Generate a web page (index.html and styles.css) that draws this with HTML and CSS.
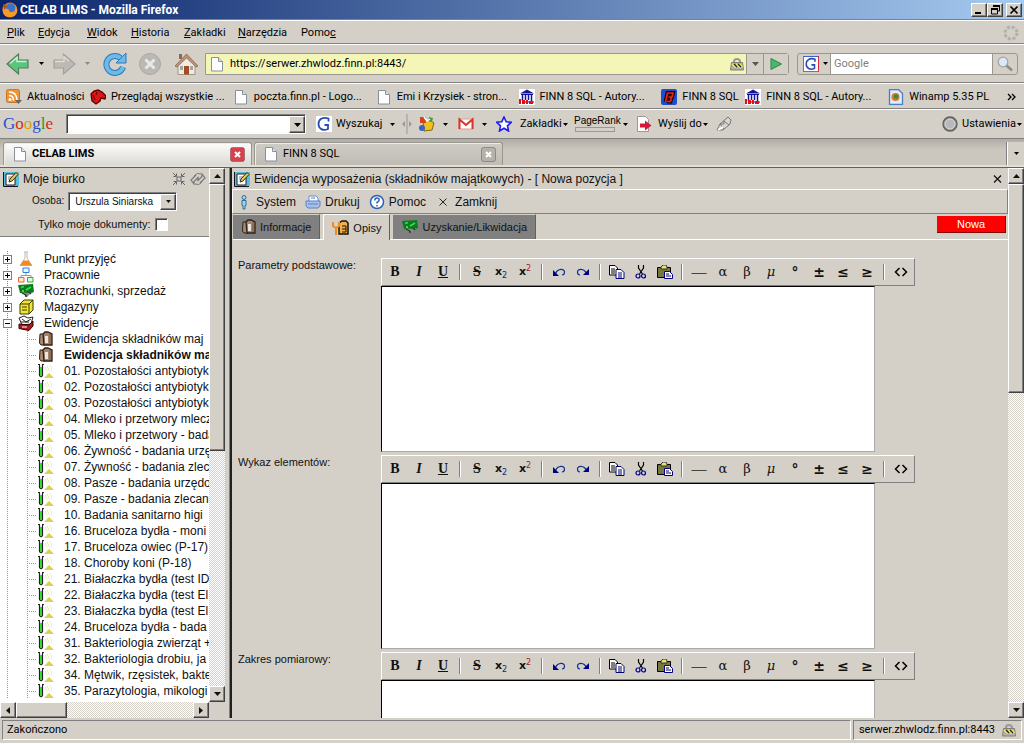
FILE: index.html
```html
<!DOCTYPE html>
<html lang="pl">
<head>
<meta charset="utf-8">
<title>CELAB LIMS</title>
<link rel="stylesheet" href="styles.css">
</head>
<body>
<svg class="defs" aria-hidden="true">
  <symbol id="page" viewBox="0 0 16 16"><path d="M2.5 1.5h7l4 4v9.500h-11z" fill="#fdfdff" stroke="#8a8f98"/><path d="M9.500 1.500v4h4" fill="#dde3ec" stroke="#8a8f98"/></symbol>
  <symbol id="down" viewBox="0 0 7 4"><path d="M0 0h7L3.500 4z" fill="currentColor"/></symbol>
  <symbol id="up" viewBox="0 0 7 4"><path d="M0 4h7L3.500 0z" fill="currentColor"/></symbol>
  <symbol id="left" viewBox="0 0 4 7"><path d="M4 0v7L0 3.500z" fill="currentColor"/></symbol>
  <symbol id="right" viewBox="0 0 4 7"><path d="M0 0v7L4 3.500z" fill="currentColor"/></symbol>
  <symbol id="cross" viewBox="0 0 9 8"><path d="M1 .5l7 7M8 .5l-7 7" stroke="currentColor" stroke-width="1.200" fill="none"/></symbol>
  <symbol id="arrow-l" viewBox="0 0 24 24"><path d="M1 12L12.500 2v6H22v8h-9.500v6z" fill="#58c77c" stroke="#5b7a63" stroke-width="1.200"/><path d="M4 11.500L11 5.500V9.500h9.500" stroke="#fff" stroke-opacity=".7" fill="none" stroke-width="1.500"/></symbol>
  <symbol id="arrow-r" viewBox="0 0 24 24"><path d="M23 12L11.500 2v6H2v8h9.500v6z" fill="#bcbab5" stroke="#a3a19c" stroke-width="1.200"/><path d="M3 9.500h9V5l5 4" stroke="#dedcd8" fill="none" stroke-width="1.500"/></symbol>
  <symbol id="lock" viewBox="0 0 14 14"><path d="M4 6V4.500C4 1 10 1 10 4.500V6" fill="none" stroke="#999" stroke-width="2"/><path d="M1.500 5.500h11l1 7.500H.5z" fill="#b4b2a8" stroke="#808078"/><path d="M2 7l4 3.500M6 7l4 3.500M9.500 7l3 3" stroke="#f4ee70" stroke-width="1.500"/><path d="M4 7l3 3M8 7l3 3" stroke="#222" stroke-width="1.300"/></symbol>
  <symbol id="gletter" viewBox="0 0 16 16"><path fill="#fff" d="M0 0h16v16H0z"/><path d="M12.500 5.500V2.500C6.500.5 2.500 3.500 2.500 8s4.500 7.500 9.500 5V9H8.500" fill="none" stroke="#2a4db5" stroke-width="1.800"/></symbol>
  <symbol id="museum" viewBox="0 0 16 16"><path fill="#fff" d="M0 0h16v16H0z"/><path d="M1 4.500L8 .5l7 4zM2 5h12v1H2z" fill="#14149a"/><path d="M3.500 6v6M6.500 6v5M9.500 6v5M12.500 6v6" stroke="#14149a" stroke-width="1.500"/><path d="M6 12.500h9v1H6z" fill="#14149a"/><path d="M0 10h2v5H0zM3 11h3v4H3zM7 11h2v4H7zM10 12h4v3h-4z" fill="#e01018"/></symbol>
  <symbol id="note" viewBox="0 0 16 16"><path d="M0 1h16v14H0z" fill="#55c0dc"/><path d="M.5 1v14.500H15" fill="none" stroke="#112" stroke-width="1"/><path d="M3 3h9v11H3z" fill="#fff" stroke="#222"/><path d="M5 6h4M5 8h3" stroke="#888"/><path d="M6 11l1-3L13 1.500l2 2-6 6.500z" fill="#e6c95c" stroke="#3a2a10"/></symbol>
  <symbol id="flask" viewBox="0 0 16 16"><path d="M6 1h4M7 1v6L2 14.500h12L9 7V1" fill="#fdfdff" stroke="#c9b9a9"/><path d="M5.500 9.500h5l3.500 5H2z" fill="#f08a24"/></symbol>
  <symbol id="org" viewBox="0 0 16 16"><path d="M8 5v4M3 11V8.500h10V11" fill="none" stroke="#999"/><path d="M5 1h6v4.500H5z" fill="#dff" stroke="#3678dc"/><path d="M.5 10.500h5.500V15H.5z" fill="#ffe8d0" stroke="#e06a30"/><path d="M9.500 10.500H15V15H9.500z" fill="#dfd" stroke="#3aa33a"/></symbol>
  <symbol id="money" viewBox="0 0 16 16"><path d="M0 2l15-1 1 8-5 2-9-1z" fill="#0c7a1e"/><path d="M3 4.500l3-1M8 7l5-3M4 8h2" stroke="#2fe347" stroke-width="1.800"/><path d="M4 9l4 5h1l5-5-5 1z" fill="#868d86"/><path d="M4 10l4 2M11 9l2 2M7 13h2" stroke="#333" stroke-width="1.300"/></symbol>
  <symbol id="box" viewBox="0 0 16 16"><path d="M2 5l4-4h9v10l-4 4H2z" fill="#eee53a" stroke="#3a3800"/><path d="M2 5h9v10M11 5l4-4" fill="none" stroke="#3a3800"/><path d="M4 8h5M4 11h5" stroke="#7a7400" stroke-width="1.500"/></symbol>
  <symbol id="drawer" viewBox="0 0 16 16"><path d="M1 3l5-2 4 2 5-1-2 7-9 1z" fill="#fff" stroke="#222"/><path d="M4 4l4 3 5-3M3 7h8" stroke="#222" fill="none"/><path d="M1 9l10 1 4-4v5l-4 4.500-10-2z" fill="#b01820" stroke="#300"/><path d="M4 12h5" stroke="#fff"/></symbol>
  <symbol id="clip" viewBox="0 0 16 16"><path d="M2 3h5v11H3L1.500 12z" fill="#a88a70" stroke="#2c2019"/><path d="M5 3l2-2h3l4 2v11H6z" fill="#a5866c" stroke="#2c2019" stroke-width="1.300"/><path d="M8.500 5v7" stroke="#e9e6e2" stroke-width="3"/><path d="M12 3v10" stroke="#75563d"/></symbol>
  <symbol id="tube" viewBox="0 0 18 16"><path d="M1 1.500h2M5 1.500h2" stroke="#222"/><path d="M2.500 2v10.500q1.500 2.500 3 0V2" fill="#fff" stroke="#222" stroke-width="1.200"/><path d="M3 4h2v9H3z" fill="#38d438"/><path d="M7 15l5-5 5 5z" fill="#d8d24c"/><path d="M9 7h1M12 8h1M14 7h1M10 4h1M13 3h1M11 6h1M14 5h1M8 5h1" stroke="#e0da70"/></symbol>
  <symbol id="expand" viewBox="0 0 14 14"><path d="M5 5h4v4H5z" fill="none" stroke="#666"/><path d="M1 1l3 3M13 1l-3 3M1 13l3-3M13 13l-3-3M4.500 1.500v3h-3M9.500 1.500v3h3M1.500 9.500h3v3M12.500 9.500h-3v3" fill="none" stroke="#666"/></symbol>
  <symbol id="sync" viewBox="0 0 16 14"><path d="M6 3L1 8l3 4V9.500l4-4V9M10 11l5-5-3-4v2.500l-4 4V5" fill="none" stroke="#777" stroke-width="1.200"/><path d="M4 4q3-4 7-2M5 12q4 2 7-2" fill="none" stroke="#777"/></symbol>
  <symbol id="undo" viewBox="0 0 14 14"><path d="M3.500 8.500C6 3 12.500 3.500 12.500 7c0 1.500-1 3-2.500 3" fill="none" stroke="#113390" stroke-width="1.200"/><path d="M1 5v6h6z" fill="#000080"/></symbol>
  <symbol id="redo" viewBox="0 0 14 14"><path d="M10.500 8.500C8 3 1.500 3.500 1.500 7c0 1.500 1 3 2.500 3" fill="none" stroke="#113390" stroke-width="1.200"/><path d="M13 4v6H7z" fill="#000080"/></symbol>
  <symbol id="copy" viewBox="0 0 16 14"><path d="M.5.5H6l2.500 2.500v7h-8z" fill="#fff" stroke="#000"/><path d="M2 4h4M2 6h4M2 8h4" stroke="#000"/><path d="M7 4.500h5l3 3v6H7z" fill="#fff" stroke="#000070"/><path d="M9 8h4M9 10h4M9 12h4" stroke="#000070"/></symbol>
  <symbol id="cut" viewBox="0 0 12 14"><path d="M3.500 0v3l4 6M8.500 0v3l-4 6" fill="none" stroke="#000" stroke-width="1.200"/><circle cx="3" cy="11" r="2" fill="none" stroke="#000090" stroke-width="1.200"/><circle cx="8.500" cy="11" r="2" fill="none" stroke="#000090" stroke-width="1.200"/></symbol>
  <symbol id="paste" viewBox="0 0 16 14"><path d="M.5 2.500h13v10H.5z" fill="#74783c" stroke="#000"/><path d="M4 4V2l2-2h3l1 2v2z" fill="#e9e36c" stroke="#333"/><path d="M7.500 6.500h5l3 3v4h-8z" fill="#fff" stroke="#000080"/><path d="M9 9h3M9 11h5" stroke="#000080"/></symbol>
  <symbol id="code" viewBox="0 0 14 10"><path d="M5.500 1L1.500 5l4 4M8.500 1l4 4-4 4" fill="none" stroke="#000" stroke-width="1.500"/></symbol>
  <symbol id="close" viewBox="0 0 15 15"><rect x=".5" y=".5" width="14" height="14" rx="2" fill="currentColor" stroke="#000" stroke-opacity=".25"/><path d="M5 5l5 5M10 5l-5 5" stroke="#fff" stroke-width="2"/></symbol>
</svg>

<header class="titlebar">
  <svg class="i16" viewBox="0 0 16 16"><circle cx="8" cy="8" r="7.500" fill="#e8741c"/><circle cx="8.500" cy="6.500" r="5" fill="#3b73c8"/><path d="M1 4c1 4 2 2 5 3 2 1 0 3 4 3 3 0 4-3 3-7 4 5 2 12-5 12S0 9 1 4z" fill="#f49a28"/><path d="M1 2l4 2-3 4z" fill="#c9480e"/></svg>
  <h1 class="titlebar-text">CELAB LIMS - Mozilla Firefox</h1>
  <button class="win-btn" aria-label="Minimalizuj"><svg class="i12" viewBox="0 0 12 10"><path d="M2 7h6v2H2z"/></svg></button>
  <button class="win-btn" aria-label="Przywróć"><svg class="i12" viewBox="0 0 12 10"><path d="M4.500 2v-1h6v5H8M2.500 4h6v5h-6z" fill="none" stroke="#000"/><path d="M4 1h7M2 4h7" stroke="#000" stroke-width="2"/></svg></button>
  <button class="win-btn win-close" aria-label="Zamknij okno"><svg class="i12" viewBox="0 0 12 10"><path d="M2.500 1.500l7 7M9.500 1.500l-7 7" stroke="#000" stroke-width="1.700"/></svg></button>
</header>

<nav class="menubar">
  <a href="#"><u>P</u>lik</a><a href="#"><u>E</u>dycja</a><a href="#"><u>W</u>idok</a><a href="#"><u>H</u>istoria</a><a href="#"><u>Z</u>akładki</a><a href="#"><u>N</u>arzędzia</a><a href="#">Pomo<u>c</u></a>
  <svg class="i16" viewBox="0 0 16 16"><circle cx="8" cy="8" r="6" fill="none" stroke="#b3b0a9" stroke-width="3" stroke-dasharray="3 1.700"/></svg>
</nav>

<div class="navbar">
  <button aria-label="Wstecz"><svg class="i24"><use href="#arrow-l"/></svg></button>
  <button aria-label="Historia wstecz"><svg class="tri-s"><use href="#down"/></svg></button>
  <button aria-label="Dalej"><svg class="i24"><use href="#arrow-r"/></svg></button>
  <button class="dim" aria-label="Historia dalej"><svg class="tri-s"><use href="#down"/></svg></button>
  <button aria-label="Odśwież"><svg class="i24" viewBox="0 0 24 24"><path d="M18 6.500A8.500 8.500 0 1 0 20 15" fill="none" stroke="#2d79b8" stroke-width="6"/><path d="M18 6.500A8.500 8.500 0 1 0 20 15" fill="none" stroke="#6cb9ea" stroke-width="4"/><path d="M23 1v10H13z" fill="#6cb9ea" stroke="#2d79b8"/></svg></button>
  <button aria-label="Zatrzymaj"><svg class="i24" viewBox="0 0 24 24"><circle cx="12" cy="12" r="10.500" fill="#bab8b4" stroke="#aaa8a3"/><path d="M7.500 7.500l9 9M16.500 7.500l-9 9" stroke="#e9e8e5" stroke-width="3"/></svg></button>
  <button aria-label="Strona startowa"><svg class="i24" viewBox="0 0 24 24"><path d="M4 12v10.500h17V12l-8.500-9z" fill="#eeeae4" stroke="#a39585"/><path d="M5 2h3v5H5z" fill="#8b6c52"/><path d="M1 14L12.500 2 24 14l-2 1-9.500-9L3 15z" fill="#bd9475" stroke="#7e5e48" stroke-width=".7"/><path d="M10 14h5v8.500h-5z" fill="#a14c28"/><path d="M6 14h3v4H6zM16 14h3v4h-3z" fill="#a9a49c"/></svg></button>
  <div class="urlbar">
    <svg class="i16"><use href="#page"/></svg>
    <input aria-label="Adres" value="https://serwer.zhwlodz.finn.pl:8443/">
    <svg class="i14"><use href="#lock"/></svg>
    <button class="url-drop" aria-label="Lista adresów"><svg class="tri"><use href="#down"/></svg></button>
    <button class="url-go" aria-label="Przejdź"><svg class="i12" viewBox="0 0 12 12"><path d="M1 .5L11.500 6 1 11.500z" fill="#46b866" stroke="#28854a"/></svg></button>
  </div>
  <div class="searchbar">
    <button class="search-engine" aria-label="Wyszukiwarka"><svg class="i16 g-frame"><use href="#gletter"/></svg><svg class="tri-s"><use href="#down"/></svg></button>
    <input aria-label="Szukaj" placeholder="Google">
    <button class="search-go" aria-label="Szukaj"><svg class="i16" viewBox="0 0 16 16"><path d="M9 9l6 5.500" stroke="#8b8b88" stroke-width="2.500"/><circle cx="6" cy="6" r="4.800" fill="#dbe9f4" stroke="#a0a6ab" stroke-width="1.300"/></svg></button>
  </div>
</div>

<nav class="bookmarks">
  <a class="bm bm-short" href="#"><svg class="i16" viewBox="0 0 16 16"><rect x=".5" y=".5" width="13" height="13" rx="2" fill="#f0943a" stroke="#c8752a"/><circle cx="4" cy="10.500" r="1.500" fill="#fff"/><path d="M3 6.500q4.500 0 4.500 5M3 3q8 0 8 8.500" fill="none" stroke="#fff" stroke-width="1.500"/><path d="M9 11h7l-3.500 4z" fill="#666"/></svg>Aktualności</a>
  <a class="bm" href="#"><svg class="i16" viewBox="0 0 16 16"><path d="M1 5l3-3 4-1 4 2 4 4-1 3-4-1-1 3-4 3-4-3z" fill="#e01414" stroke="#500" stroke-width="1.300"/><path d="M3 6l2 5M7 3L6 6" stroke="#500"/></svg>Przeglądaj wszystkie ...</a>
  <a class="bm" href="#"><svg class="i16"><use href="#page"/></svg>poczta.finn.pl - Logo...</a>
  <a class="bm" href="#"><svg class="i16"><use href="#page"/></svg>Emi i Krzysiek - stron...</a>
  <a class="bm" href="#"><svg class="i16"><use href="#museum"/></svg>FINN 8 SQL - Autory...</a>
  <a class="bm bm-short" href="#"><svg class="i16" viewBox="0 0 16 16"><rect width="16" height="16" rx="2" fill="#1c4fd0"/><path d="M4.500 13L6.500 4h5.500l-1 4H7.500h3l-1 4.500H6" fill="none" stroke="#200" stroke-width="4"/><path d="M4.500 13L6.500 4h5.500l-1 4H7.500h3l-1 4.500H6" fill="none" stroke="#e82418" stroke-width="1.700"/></svg>FINN 8 SQL</a>
  <a class="bm" href="#"><svg class="i16"><use href="#museum"/></svg>FINN 8 SQL - Autory...</a>
  <a class="bm bm-last" href="#"><svg class="i16" viewBox="0 0 16 16"><path d="M1.500.5h9l4 4v11h-13z" fill="#dcecfb" stroke="#4a7ec0" stroke-width="1.300"/><circle cx="7.500" cy="8" r="4" fill="#dd7a24"/><circle cx="8" cy="7.500" r="2.200" fill="#2e8a5a"/></svg>Winamp 5.35 PL</a>
  <button class="bm-more" aria-label="Więcej zakładek"><svg class="i9" viewBox="0 0 9 8"><path d="M1 1l3 3-3 3M5 1l3 3-3 3" fill="none" stroke="#000" stroke-width="1.300"/></svg></button>
</nav>

<div class="gbar">
  <span class="glogo"><span class="g-b">G</span><span class="g-r">o</span><span class="g-y">o</span><span class="g-b">g</span><span class="g-g">l</span><span class="g-r">e</span></span>
  <div class="gselect sunken"><input aria-label="Szukaj w Google"><button class="drop" aria-label="Rozwiń"><svg class="tri"><use href="#down"/></svg></button></div>
  <svg class="i16"><use href="#gletter"/></svg>
  <button>Wyszukaj</button>
  <svg class="tri-s"><use href="#down"/></svg>
  <svg class="split" viewBox="0 0 10 20"><path d="M5 0v20" stroke="#999"/><path d="M3 7v6L0 10zM7 7v6l3-3z" fill="#999"/></svg>
  <svg class="i16" viewBox="0 0 16 16"><path d="M4 6l6-2 5 3-2 7-8 1z" fill="#f0c020" stroke="#8a6500"/><path d="M1 1h6v6H1z" fill="#d8411c"/><circle cx="3" cy="12" r="3" fill="#3b66c8"/><path d="M10 1l4 1-1 4-4-1z" fill="#4a9a44"/><path d="M5 1l3 4 3-2" stroke="#fff" stroke-width="1.500" fill="none"/></svg>
  <svg class="tri-s"><use href="#down"/></svg>
  <svg class="i16" viewBox="0 0 16 16"><path d="M1 3h14v10H1z" fill="#fff" stroke="#e29a92"/><path d="M1.500 13V3.500L8 9l6.500-5.500V13" fill="none" stroke="#d8352a" stroke-width="2"/></svg>
  <svg class="tri-s"><use href="#down"/></svg>
  <svg class="i16" viewBox="0 0 16 16"><path d="M8 1l2.200 4.800 5 .5-3.700 3.500 1 5.200L8 12.300 3.500 15l1-5.200L.8 6.300l5-.5z" fill="#fff" stroke="#1c1cf0" stroke-width="1.600"/></svg>
  <button>Zakładki<svg class="tri-s"><use href="#down"/></svg></button>
  <span class="pagerank"><span>PageRank</span><span class="pr-meter"></span></span>
  <svg class="tri-s"><use href="#down"/></svg>
  <svg class="i16" viewBox="0 0 16 16"><path d="M1.500.5h8l3 3v12h-11z" fill="#fff" stroke="#999"/><path d="M4 7.500h5v-3l6.500 5-6.500 5v-3H4z" fill="#d81838"/></svg>
  <button>Wyślij do<svg class="tri-s"><use href="#down"/></svg></button>
  <svg class="i16" viewBox="0 0 16 16"><path d="M1 14l3-6 8-7 3 3-1 4-7 6z" fill="#d8d6d1" stroke="#777"/><path d="M4 8l4 5M8 5l5 4M4 8h4V5" stroke="#777" fill="none"/><path d="M2 14l5-3" stroke="#fff" stroke-width="1.500"/></svg>
  <svg class="i16 g-end" viewBox="0 0 16 16"><circle cx="8" cy="8" r="7" fill="#8e8e8e" stroke="#5f5f5f" stroke-width="1.300"/><circle cx="8" cy="8" r="5" fill="#b8b8b8" stroke="#ddd"/></svg>
  <button>Ustawienia<svg class="tri-s"><use href="#down"/></svg></button>
</div>

<div class="tabs">
  <div class="tab tab-on"><svg class="i16"><use href="#page"/></svg><a href="#">CELAB LIMS</a><button aria-label="Zamknij kartę"><svg class="i15 red"><use href="#close"/></svg></button></div>
  <div class="tab"><svg class="i16"><use href="#page"/></svg><a href="#">FINN 8 SQL</a><button aria-label="Zamknij kartę"><svg class="i15 grey"><use href="#close"/></svg></button></div>
  <button class="tabs-all" aria-label="Lista kart"><svg class="tri-s"><use href="#down"/></svg></button>
</div>

<div class="frames">
  <aside class="side">
    <div class="side-view">
      <form class="desk">
        <div class="desk-head"><svg class="i16"><use href="#note"/></svg><h2>Moje biurko</h2><svg class="i14"><use href="#expand"/></svg><svg class="sync"><use href="#sync"/></svg></div>
        <div class="desk-person"><label for="person">Osoba:</label><span class="pick sunken"><select id="person"><option>Urszula Siniarska</option></select><span class="drop"><svg class="tri-s"><use href="#down"/></svg></span></span></div>
        <div class="desk-only"><label for="only">Tylko moje dokumenty:</label><input type="checkbox" id="only" class="sunken"></div>
      </form>
      <ul class="tree">
        <li class="root"><button class="box plus" aria-label="Rozwiń"></button><svg class="i16"><use href="#flask"/></svg><a href="#">Punkt przyjęć</a></li>
        <li class="root"><button class="box plus" aria-label="Rozwiń"></button><svg class="i16"><use href="#org"/></svg><a href="#">Pracownie</a></li>
        <li class="root"><button class="box plus" aria-label="Rozwiń"></button><svg class="i16"><use href="#money"/></svg><a href="#">Rozrachunki, sprzedaż</a></li>
        <li class="root"><button class="box plus" aria-label="Rozwiń"></button><svg class="i16"><use href="#box"/></svg><a href="#">Magazyny</a></li>
        <li class="root"><button class="box" aria-label="Zwiń"></button><svg class="i16"><use href="#drawer"/></svg><a href="#">Ewidencje</a></li>
        <li class="leaf"><svg class="i18"><use href="#clip"/></svg><a href="#">Ewidencja składników maj</a></li>
        <li class="leaf on"><svg class="i18"><use href="#clip"/></svg><a href="#">Ewidencja składników ma</a></li>
        <li class="leaf"><svg class="i18"><use href="#tube"/></svg><a href="#">01. Pozostałości antybiotyk</a></li>
        <li class="leaf"><svg class="i18"><use href="#tube"/></svg><a href="#">02. Pozostałości antybiotyk</a></li>
        <li class="leaf"><svg class="i18"><use href="#tube"/></svg><a href="#">03. Pozostałości antybiotyk</a></li>
        <li class="leaf"><svg class="i18"><use href="#tube"/></svg><a href="#">04. Mleko i przetwory mlecz</a></li>
        <li class="leaf"><svg class="i18"><use href="#tube"/></svg><a href="#">05. Mleko i przetwory - bada</a></li>
        <li class="leaf"><svg class="i18"><use href="#tube"/></svg><a href="#">06. Żywność - badania urzę</a></li>
        <li class="leaf"><svg class="i18"><use href="#tube"/></svg><a href="#">07. Żywność - badania zlec</a></li>
        <li class="leaf"><svg class="i18"><use href="#tube"/></svg><a href="#">08. Pasze - badania urzędo</a></li>
        <li class="leaf"><svg class="i18"><use href="#tube"/></svg><a href="#">09. Pasze - badania zlecan</a></li>
        <li class="leaf"><svg class="i18"><use href="#tube"/></svg><a href="#">10. Badania sanitarno higi</a></li>
        <li class="leaf"><svg class="i18"><use href="#tube"/></svg><a href="#">16. Bruceloza bydła - moni</a></li>
        <li class="leaf"><svg class="i18"><use href="#tube"/></svg><a href="#">17. Bruceloza owiec (P-17)</a></li>
        <li class="leaf"><svg class="i18"><use href="#tube"/></svg><a href="#">18. Choroby koni (P-18)</a></li>
        <li class="leaf"><svg class="i18"><use href="#tube"/></svg><a href="#">21. Białaczka bydła (test ID</a></li>
        <li class="leaf"><svg class="i18"><use href="#tube"/></svg><a href="#">22. Białaczka bydła (test El</a></li>
        <li class="leaf"><svg class="i18"><use href="#tube"/></svg><a href="#">23. Białaczka bydła (test El</a></li>
        <li class="leaf"><svg class="i18"><use href="#tube"/></svg><a href="#">24. Bruceloza bydła - bada</a></li>
        <li class="leaf"><svg class="i18"><use href="#tube"/></svg><a href="#">31. Bakteriologia zwierząt +</a></li>
        <li class="leaf"><svg class="i18"><use href="#tube"/></svg><a href="#">32. Bakteriologia drobiu, ja</a></li>
        <li class="leaf"><svg class="i18"><use href="#tube"/></svg><a href="#">34. Mętwik, rzęsistek, bakte</a></li>
        <li class="leaf"><svg class="i18"><use href="#tube"/></svg><a href="#">35. Parazytologia, mikologi</a></li>
      </ul>
    </div>
    <div class="vscroll side-v"><button class="sb" aria-label="W górę"><svg class="tri"><use href="#up"/></svg></button><span class="thumb"></span><button class="sb end" aria-label="W dół"><svg class="tri"><use href="#down"/></svg></button></div>
    <div class="hscroll"><button class="sb" aria-label="W lewo"><svg class="tri-h"><use href="#left"/></svg></button><span class="thumb"></span><button class="sb end" aria-label="W prawo"><svg class="tri-h"><use href="#right"/></svg></button></div>
  </aside>

  <main class="main">
    <div class="main-view">
      <div class="doc-head"><svg class="i16"><use href="#note"/></svg><h2>Ewidencja wyposażenia (składników majątkowych) - [ Nowa pozycja ]</h2><button aria-label="Zamknij"><svg class="i9"><use href="#cross"/></svg></button></div>
      <div class="doc-tools">
        <button><svg class="i16" viewBox="0 0 16 16"><circle cx="8" cy="3.500" r="2" fill="#9fd4ee" stroke="#2d6f96"/><path d="M6 6.500h4v5H9v3.500H7v-3.500H6z" fill="#9fd4ee" stroke="#2d6f96"/></svg>System</button>
        <button><svg class="i16" viewBox="0 0 16 16"><path d="M4 7V2h7l2 2v3" fill="#fff" stroke="#6a8ed0"/><path d="M1 7h14v5l-2 2H3l-2-2z" fill="#a9c0ea" stroke="#5a7fc6"/><path d="M3 10h10M6 4h4" stroke="#5a7fc6"/></svg>Drukuj</button>
        <button><svg class="i16" viewBox="0 0 16 16"><circle cx="8" cy="8" r="6.500" fill="#fff" stroke="#2e62b4" stroke-width="1.500"/><path d="M5.800 6.500q0-2.500 2.200-2.500t2.200 2q0 1.200-2.200 2.500v1M8 11v1.500" fill="none" stroke="#2e62b4" stroke-width="1.500"/></svg>Pomoc</button>
        <button><svg class="i16" viewBox="0 0 16 16"><path d="M4.500 4.500l7 7M11.500 4.500l-7 7" stroke="#222"/></svg>Zamknij</button>
      </div>
      <div class="doc-tabs">
        <button class="dtab"><svg class="i16"><use href="#clip"/></svg>Informacje</button>
        <button class="dtab dtab-on"><svg class="i18" viewBox="0 0 18 16"><path d="M7 3l3-2h4l2 2v11H7z" fill="#f2b04a" stroke="#1c1208" stroke-width="1.500"/><path d="M10 6h4v6h-4M10 9h4" fill="none" stroke="#1c1208"/><path d="M1 2v4l3 2 3-2V2M4 7v8" fill="none" stroke="#ee8c22" stroke-width="2"/></svg>Opisy</button>
        <button class="dtab"><svg class="i18" viewBox="0 0 16 16"><use href="#money"/></svg>Uzyskanie/Likwidacja</button>
        <span class="badge">Nowa</span>
      </div>
      <div class="fields">
        <div class="field"><label for="f1">Parametry podstawowe:</label>
          <div class="editor"><div class="ebar"><button class="s"><b>B</b></button><button class="s"><b><i>I</i></b></button><button class="s"><b><u>U</u></b></button><span class="sep"></span><button class="s"><b><s>S</s></b></button><button class="x">x<sub>2</sub></button><button class="x">x<sup>2</sup></button><span class="sep"></span><button aria-label="Cofnij"><svg class="i14"><use href="#undo"/></svg></button><button aria-label="Ponów"><svg class="i14"><use href="#redo"/></svg></button><span class="sep"></span><button aria-label="Kopiuj"><svg class="ico"><use href="#copy"/></svg></button><button aria-label="Wytnij"><svg class="ico"><use href="#cut"/></svg></button><button aria-label="Wklej"><svg class="ico"><use href="#paste"/></svg></button><span class="sep"></span><button class="dash">—</button><button class="g">α</button><button class="g">β</button><button class="g"><i>μ</i></button><button class="m">°</button><button class="m">±</button><button class="m">≤</button><button class="m">≥</button><span class="sep"></span><button aria-label="Kod"><svg class="code"><use href="#code"/></svg></button></div><textarea id="f1"></textarea></div></div>
        <div class="field"><label for="f2">Wykaz elementów:</label>
          <div class="editor"><div class="ebar"><button class="s"><b>B</b></button><button class="s"><b><i>I</i></b></button><button class="s"><b><u>U</u></b></button><span class="sep"></span><button class="s"><b><s>S</s></b></button><button class="x">x<sub>2</sub></button><button class="x">x<sup>2</sup></button><span class="sep"></span><button aria-label="Cofnij"><svg class="i14"><use href="#undo"/></svg></button><button aria-label="Ponów"><svg class="i14"><use href="#redo"/></svg></button><span class="sep"></span><button aria-label="Kopiuj"><svg class="ico"><use href="#copy"/></svg></button><button aria-label="Wytnij"><svg class="ico"><use href="#cut"/></svg></button><button aria-label="Wklej"><svg class="ico"><use href="#paste"/></svg></button><span class="sep"></span><button class="dash">—</button><button class="g">α</button><button class="g">β</button><button class="g"><i>μ</i></button><button class="m">°</button><button class="m">±</button><button class="m">≤</button><button class="m">≥</button><span class="sep"></span><button aria-label="Kod"><svg class="code"><use href="#code"/></svg></button></div><textarea id="f2"></textarea></div></div>
        <div class="field"><label for="f3">Zakres pomiarowy:</label>
          <div class="editor"><div class="ebar"><button class="s"><b>B</b></button><button class="s"><b><i>I</i></b></button><button class="s"><b><u>U</u></b></button><span class="sep"></span><button class="s"><b><s>S</s></b></button><button class="x">x<sub>2</sub></button><button class="x">x<sup>2</sup></button><span class="sep"></span><button aria-label="Cofnij"><svg class="i14"><use href="#undo"/></svg></button><button aria-label="Ponów"><svg class="i14"><use href="#redo"/></svg></button><span class="sep"></span><button aria-label="Kopiuj"><svg class="ico"><use href="#copy"/></svg></button><button aria-label="Wytnij"><svg class="ico"><use href="#cut"/></svg></button><button aria-label="Wklej"><svg class="ico"><use href="#paste"/></svg></button><span class="sep"></span><button class="dash">—</button><button class="g">α</button><button class="g">β</button><button class="g"><i>μ</i></button><button class="m">°</button><button class="m">±</button><button class="m">≤</button><button class="m">≥</button><span class="sep"></span><button aria-label="Kod"><svg class="code"><use href="#code"/></svg></button></div><textarea id="f3"></textarea></div></div>
      </div>
    </div>
    <div class="vscroll main-v"><button class="sb" aria-label="W górę"><svg class="tri"><use href="#up"/></svg></button><span class="thumb"></span><button class="sb end" aria-label="W dół"><svg class="tri"><use href="#down"/></svg></button></div>
  </main>
</div>

<footer class="status"><span class="st-text">Zakończono</span><span class="st-host">serwer.zhwlodz.finn.pl:8443<svg class="i14"><use href="#lock"/></svg></span></footer>
</body>
</html>
```
FILE: styles.css
```css
:root {
  --face: #d4d0c8;
  --shade: #808080;
  --ui: Roboto, "Liberation Sans", sans-serif;
  --doc: "Liberation Sans", Arial, sans-serif;
}
* { box-sizing: border-box; }
body {
  margin: 0;
  height: 100vh;
  display: flex;
  flex-direction: column;
  overflow: hidden;
  background: var(--face);
  font: 11px/16px var(--ui);
  color: #000;
}
a { color: inherit; text-decoration: none; white-space: nowrap; }
h1, h2 { margin: 0; font-size: inherit; font-weight: normal; white-space: nowrap; }
button {
  border: 0;
  padding: 0;
  margin: 0;
  background: none;
  font: inherit;
  color: inherit;
  white-space: nowrap;
  display: flex;
  align-items: center;
  justify-content: center;
}
input, textarea, select { border: 0; padding: 0; margin: 0; font: inherit; color: inherit; background: #fff; outline: 0; border-radius: 0; }
svg { flex: none; display: block; }
.defs { width: 0; height: 0; position: absolute; }
.i9 { width: 9px; height: 8px; }
.i12 { width: 12px; height: 12px; }
.i14 { width: 14px; height: 14px; }
.i15 { width: 15px; height: 15px; }
.i16 { width: 16px; height: 16px; }
.i18 { width: 18px; height: 16px; }
.i24 { width: 24px; height: 24px; }
.tri { width: 7px; height: 4px; }
.tri-s { width: 5px; height: 3px; }
.tri-h { width: 4px; height: 7px; }
.dim { color: #8a8781; }
.red { color: #d8404a; }
.grey { color: #b5b2ab; }
.sunken { border: 1px solid; border-color: #808080 #fff #fff #808080; box-shadow: inset 1px 1px #404040; background: #fff; }
.drop, .sb, .thumb, .win-btn { background: var(--face); border: 1px solid; border-color: #fff #404040 #404040 #fff; box-shadow: inset -1px -1px #808080; }

.titlebar { height: 19px; flex: none; display: flex; align-items: center; padding: 0 2px; background: linear-gradient(90deg, #0a246a, #a6caf0); color: #fff; }
.titlebar-text { flex: 1; padding-left: 2px; font: bold 12px/16px var(--ui); }
.win-btn { width: 16px; height: 14px; }
.win-btn .i12 { height: 10px; }
.win-close { margin-left: 3px; }

.menubar { height: 25px; flex: none; padding: 2px 5px 0 7px; display: grid; grid-template-columns: 31px 49px 44px 53px 54px 63px 1fr 16px; align-items: center; border-top: 1px solid #808080; border-bottom: 1px solid #808080; box-shadow: inset 0 1px #fff; }

.navbar { height: 39px; flex: none; padding: 0 6px; display: grid; grid-template-columns: 24px 22px 24px 22px 34px 36px 36px 1fr 221px; align-items: center; border-top: 1px solid #fff; border-bottom: 1px solid #808080; }
.urlbar, .searchbar { height: 22px; display: flex; align-items: center; border: 1px solid #999690; }
.urlbar { margin: 0 8px 0 1px; padding-left: 3px; background: #f4f6b8; border-radius: 0 3px 3px 0; gap: 5px; }
.urlbar input { flex: 1; min-width: 0; background: none; }
.url-drop, .url-go { align-self: stretch; background: var(--face); border-left: 1px solid #999690; color: #555; }
.url-drop { width: 17px; margin-left: -3px; }
.url-go { width: 25px; margin-left: -5px; }
.searchbar { border-radius: 3px; }
.search-engine { width: 32px; gap: 4px; padding-left: 2px; }
.g-frame { border: 1px solid; border-color: #3a62d0 #d83030 #3aa04a #3aa04a; }
.searchbar input { flex: 1; min-width: 0; align-self: stretch; padding-left: 3px; border-left: 1px solid #999690; }
.searchbar input::placeholder { color: #808080; opacity: 1; }
.search-go { width: 25px; align-self: stretch; border-left: 1px solid #999690; }

.bookmarks { height: 26px; flex: none; padding: 1px 6px 0; display: flex; align-items: center; border-top: 1px solid #fff; border-bottom: 1px solid #808080; }
.bm { flex: 0 1 143px; min-width: 0; display: flex; align-items: center; gap: 5px; }
.bm-short { flex-basis: 84px; }
.bm-last { flex: 1 1 116px; }
.bm-more { width: 14px; }

.gbar { height: 30px; flex: none; padding: 0 3px; display: grid; grid-template-columns: 63px 240px 10px 20px 54px 12px 17px 24px 15px 24px 14px 24px 54px 49px 13px 22px 58px 1fr 20px 59px; align-items: center; border-top: 1px solid #fff; border-bottom: 1px solid #808080; }
.gbar > .gselect { grid-column: 2 / 3; }
.gbar > .gselect + svg { grid-column: 4; }
.gbar button { justify-content: flex-start; gap: 1px; }
.glogo { font: 17px/20px "Liberation Serif", serif; }
.g-b { color: #2a53c8; }
.g-r { color: #d22a22; }
.g-y { color: #d6a400; }
.g-g { color: #22963a; }
.gselect { height: 20px; display: flex; padding: 1px 0 0 1px; }
.gselect input { flex: 1; min-width: 0; }
.gbar .drop { width: 16px; justify-content: center; }
.split { width: 10px; height: 20px; }
.pagerank { display: flex; flex-direction: column; font: 10px/10px var(--doc); gap: 1px; }
.pr-meter { width: 40px; height: 5px; border: 1px solid #999; margin-left: 1px; }

.tabs { height: 28px; flex: none; padding: 3px 0 0 3px; display: flex; gap: 2px; background: linear-gradient(#b0aca4, #cbc7bf 40%); border-bottom: 2px solid #e2dfd9; }
.tab { width: 249px; min-width: 0; padding: 0 6px 0 8px; display: flex; align-items: center; gap: 4px; border: 1px solid #999690; border-bottom: 0; border-radius: 3px 3px 0 0; background: linear-gradient(#cfccc5, #bfbcb5); box-shadow: inset 1px 1px #efeeeb; }
.tab a { flex: 1; overflow: hidden; }
.tab-on { background: linear-gradient(#fdfdfc, #dcd9d3); font-weight: bold; }
.tabs-all { width: 17px; margin-left: auto; background: var(--face); border-left: 1px solid #fff; box-shadow: -1px 0 #808080; }

.frames { flex: 1; min-height: 0; display: flex; font: 12px/16px var(--doc); color: #111; border-top: 1px solid #606060; }
.side { width: 230px; flex: none; display: grid; grid-template: minmax(0, 1fr) 16px / minmax(0, 1fr) 16px; padding-right: 4px; border-right: 1px solid #808080; }
.side-view { display: flex; flex-direction: column; min-height: 0; overflow: hidden; }
.desk { flex: none; height: 69px; border-bottom: 1px solid #808080; font-size: 11px; padding: 0 3px; }
.desk-head { height: 22px; display: flex; align-items: center; gap: 4px; font-size: 12px; }
.desk-head h2 { flex: 1; }
.sync { width: 16px; height: 14px; }
.desk-person { height: 22px; padding-left: 29px; display: flex; align-items: center; gap: 4px; font-size: 10px; }
.desk-only { height: 24px; padding-left: 35px; display: flex; align-items: center; gap: 4px; font-size: 11px; }
.pick { width: 109px; height: 19px; display: flex; padding: 1px 0 0 1px; }
.pick select { flex: 1; min-width: 0; appearance: none; padding-left: 5px; background: none; font-size: 10px; }
.pick .drop { width: 16px; display: flex; align-items: center; justify-content: center; }
#only { appearance: none; width: 13px; height: 13px; }
.tree { flex: 1; margin: 0; padding: 14px 0 0; list-style: none; background: #fff; }
.tree li { height: 16px; display: flex; align-items: center; }
.root { padding-left: 3px; background: repeating-linear-gradient(#888 0 1px, transparent 1px 2px) 7px 0 / 1px 100% no-repeat; }
.root .i16 { margin: 0 10px 0 6px; }
.box { width: 9px; height: 9px; border: 1px solid #808080; background: linear-gradient(#000, #000) center / 5px 1px no-repeat, #fff; }
.plus { background: linear-gradient(#000, #000) center / 5px 1px no-repeat, linear-gradient(#000, #000) center / 1px 5px no-repeat, #fff; }
.leaf { padding-left: 37px; background: repeating-linear-gradient(#999 0 1px, transparent 1px 2px) 7px 0 / 1px 100% no-repeat, repeating-linear-gradient(#999 0 1px, transparent 1px 2px) 27px 0 / 1px 100% no-repeat, repeating-linear-gradient(90deg, #999 0 1px, transparent 1px 2px) 27px 8px / 9px 1px no-repeat; }
.leaf .i18 { margin-right: 9px; }
.on { font-weight: bold; }

.vscroll, .hscroll { display: flex; background: repeating-conic-gradient(#fff 0 25%, #d4d0c8 0 50%) 0 0 / 2px 2px; }
.vscroll { flex-direction: column; width: 16px; flex-shrink: 0; }
.sb { width: 16px; height: 16px; flex: none; }
.end { margin-top: auto; }
.hscroll .end { margin: 0 0 0 auto; }
.side-v .thumb { flex: 0 0 50%; }
.main-v .thumb { flex: 0 0 38%; }
.hscroll .thumb { flex: 0 0 51px; }

.main { flex: 1; min-width: 0; display: flex; border-left: 2px solid #202020; }
.main-view { flex: 1; min-width: 0; overflow: hidden; display: flex; flex-direction: column; }
.doc-head { flex: none; height: 21px; padding: 0 6px 0 2px; display: flex; align-items: center; gap: 4px; }
.doc-head h2 { flex: 1; }
.doc-tools { flex: none; height: 25px; padding-left: 3px; display: flex; align-items: center; gap: 9px; border: 1px solid; border-color: #fff #808080 #808080 #fff; }
.doc-tools button { gap: 4px; }
.doc-tabs { flex: none; height: 26px; margin-left: 1px; display: flex; align-items: stretch; gap: 3px; border-bottom: 1px solid #fff; font-size: 11px; }
.dtab { padding: 0 8px; gap: 3px; background: #808080; border-right: 1px solid #606060; border-top: 1px solid #d4d0c8; }
.dtab-on { background: var(--face); border-top-color: #fff; border-left: 1px solid #fff; margin-bottom: -1px; }
.badge { margin: 2px 2px 6px auto; width: 69px; text-align: center; background: #f00; color: #fff; border-right: 1px solid #800; border-bottom: 1px solid #800; }
.fields { padding: 18px 0 0 6px; }
.field { display: flex; align-items: flex-start; margin-bottom: 3px; }
.field label { flex: 0 0 143px; font-size: 11px; line-height: 15px; }
.ebar { width: 534px; height: 28px; padding-left: 1px; display: flex; align-items: center; border: 1px solid; border-color: #fff #808080 #808080 #fff; }
.ebar button { width: 24px; height: 24px; }
.ebar .s { font: 14px/20px "Liberation Serif", serif; }
.ebar .g { font: 15px/20px "DejaVu Serif", serif; font-size: 13px; }
.ebar .m { font: bold 14px/20px "DejaVu Sans", sans-serif; }
.ebar .x { font: bold 11px/20px "DejaVu Sans", sans-serif; }
.ebar .dash { font-size: 15px; color: #444; }
.x sub, .x sup { font-size: 8px; line-height: 8px; font-weight: normal; color: #102080; }
.x sub { align-self: flex-end; padding-bottom: 4px; }
.x sup { align-self: flex-start; padding-top: 5px; color: #a02020; }
.sep { width: 2px; height: 16px; margin: 0 4px; border-left: 1px solid #808080; border-right: 1px solid #fff; }
.ico { width: 16px; height: 14px; }
.code { width: 14px; height: 10px; }
textarea { display: block; width: 494px; height: 166px; resize: none; border: 1px solid; border-color: #000 #aaa #aaa #000; }

.status { height: 26px; flex: none; display: flex; gap: 2px; padding: 2px 2px 3px; border-bottom: 1px solid #fff; }
.st-text, .st-host { display: flex; align-items: center; border: 1px solid; border-color: #808080 #fff #fff #808080; padding: 0 5px; }
.st-text { flex: 1; padding-left: 4px; }
.st-host { gap: 7px; }
```
